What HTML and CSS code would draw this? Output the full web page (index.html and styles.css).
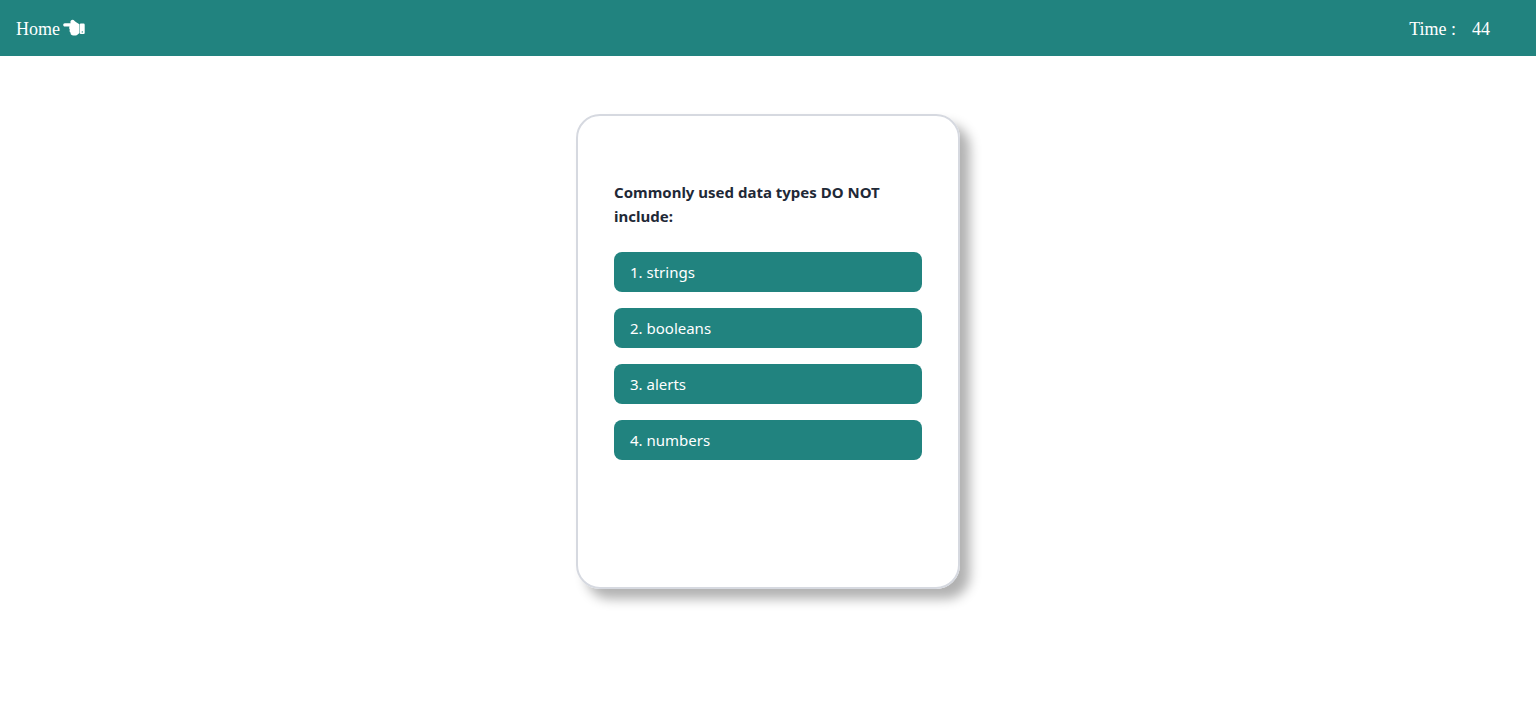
FILE: index.html
```html
<!DOCTYPE html>
<html lang="en">
<head>
<meta charset="utf-8">
<meta name="viewport" content="width=device-width, initial-scale=1">
<title>Code Quiz</title>
<link rel="stylesheet" href="styles.css">
</head>
<body>
<header class="topbar">
  <a class="home" href="#">Home
    <svg class="hand" viewBox="0 0 22 17" aria-hidden="true">
      <path d="M1.8 4.2H7.6C7 2.4 7.8.8 9.6.7 11 .8 11.8 2.2 13.2 3.2L16.4 5.2V14.2C15.2 14.8 14.4 16.4 12.6 16.4H10.4C8.4 16.4 7.4 15.2 7.6 13.8 6.5 13 6.3 11.8 6.9 10.8 6.1 10 6 8.7 6.5 7.6H1.8C-.3 7.4-.3 4.4 1.8 4.2Z"/>
      <path fill-rule="evenodd" d="M17.8 4.6H20.6Q21.7 4.6 21.7 5.7V14Q21.7 15.1 20.6 15.1H17.8Q16.8 15.1 16.8 14V5.7Q16.8 4.6 17.8 4.6ZM19.3 12.2A.7.7 0 1 0 19.3 13.6.7.7 0 1 0 19.3 12.2Z"/>
    </svg>
  </a>
  <div class="timer"><span>Time :</span><span class="seconds">44</span></div>
</header>
<main class="stage">
  <section class="card">
    <h1 class="question">Commonly used data types DO NOT include:</h1>
    <div class="answers">
      <button class="answer" type="button">1. strings</button>
      <button class="answer" type="button">2. booleans</button>
      <button class="answer" type="button">3. alerts</button>
      <button class="answer" type="button">4. numbers</button>
    </div>
  </section>
</main>
</body>
</html>
```
FILE: styles.css
```css
* { box-sizing: border-box; }
body {
  margin: 0;
  background: #fff;
  color: #1f2937;
  font: 15px/24px "Segoe UI", "Noto Sans", sans-serif;
}
.topbar {
  display: flex;
  justify-content: space-between;
  align-items: center;
  padding: 17px 46px 15px 16px;
  background: #21837f;
  color: #fff;
  font: 18px/24px Georgia, "Liberation Serif", serif;
}
.home {
  display: flex;
  align-items: center;
  gap: 3px;
  color: inherit;
  text-decoration: none;
}
.hand {
  width: 22px;
  height: 17px;
  margin-bottom: 4px;
  fill: #fff;
}
.timer {
  display: flex;
  gap: 16px;
}
.stage {
  display: flex;
  justify-content: center;
  padding: 58px 16px;
}
.card {
  width: 25%;
  min-width: 384px;
  min-height: 475px;
  padding: 64px 36px;
  border: 2px solid #d6d9e0;
  border-radius: 24px;
  box-shadow: 10px 10px 12px #b2b2b2;
}
.question {
  margin: 0 0 24px;
  font-size: 15px;
  line-height: 24px;
  font-weight: 700;
}
.answers {
  display: grid;
  gap: 16px;
}
.answer {
  padding: 8px 16px;
  border: 0;
  border-radius: 8px;
  background: #21837f;
  color: #fff;
  font: inherit;
  text-align: left;
  cursor: pointer;
}
```
